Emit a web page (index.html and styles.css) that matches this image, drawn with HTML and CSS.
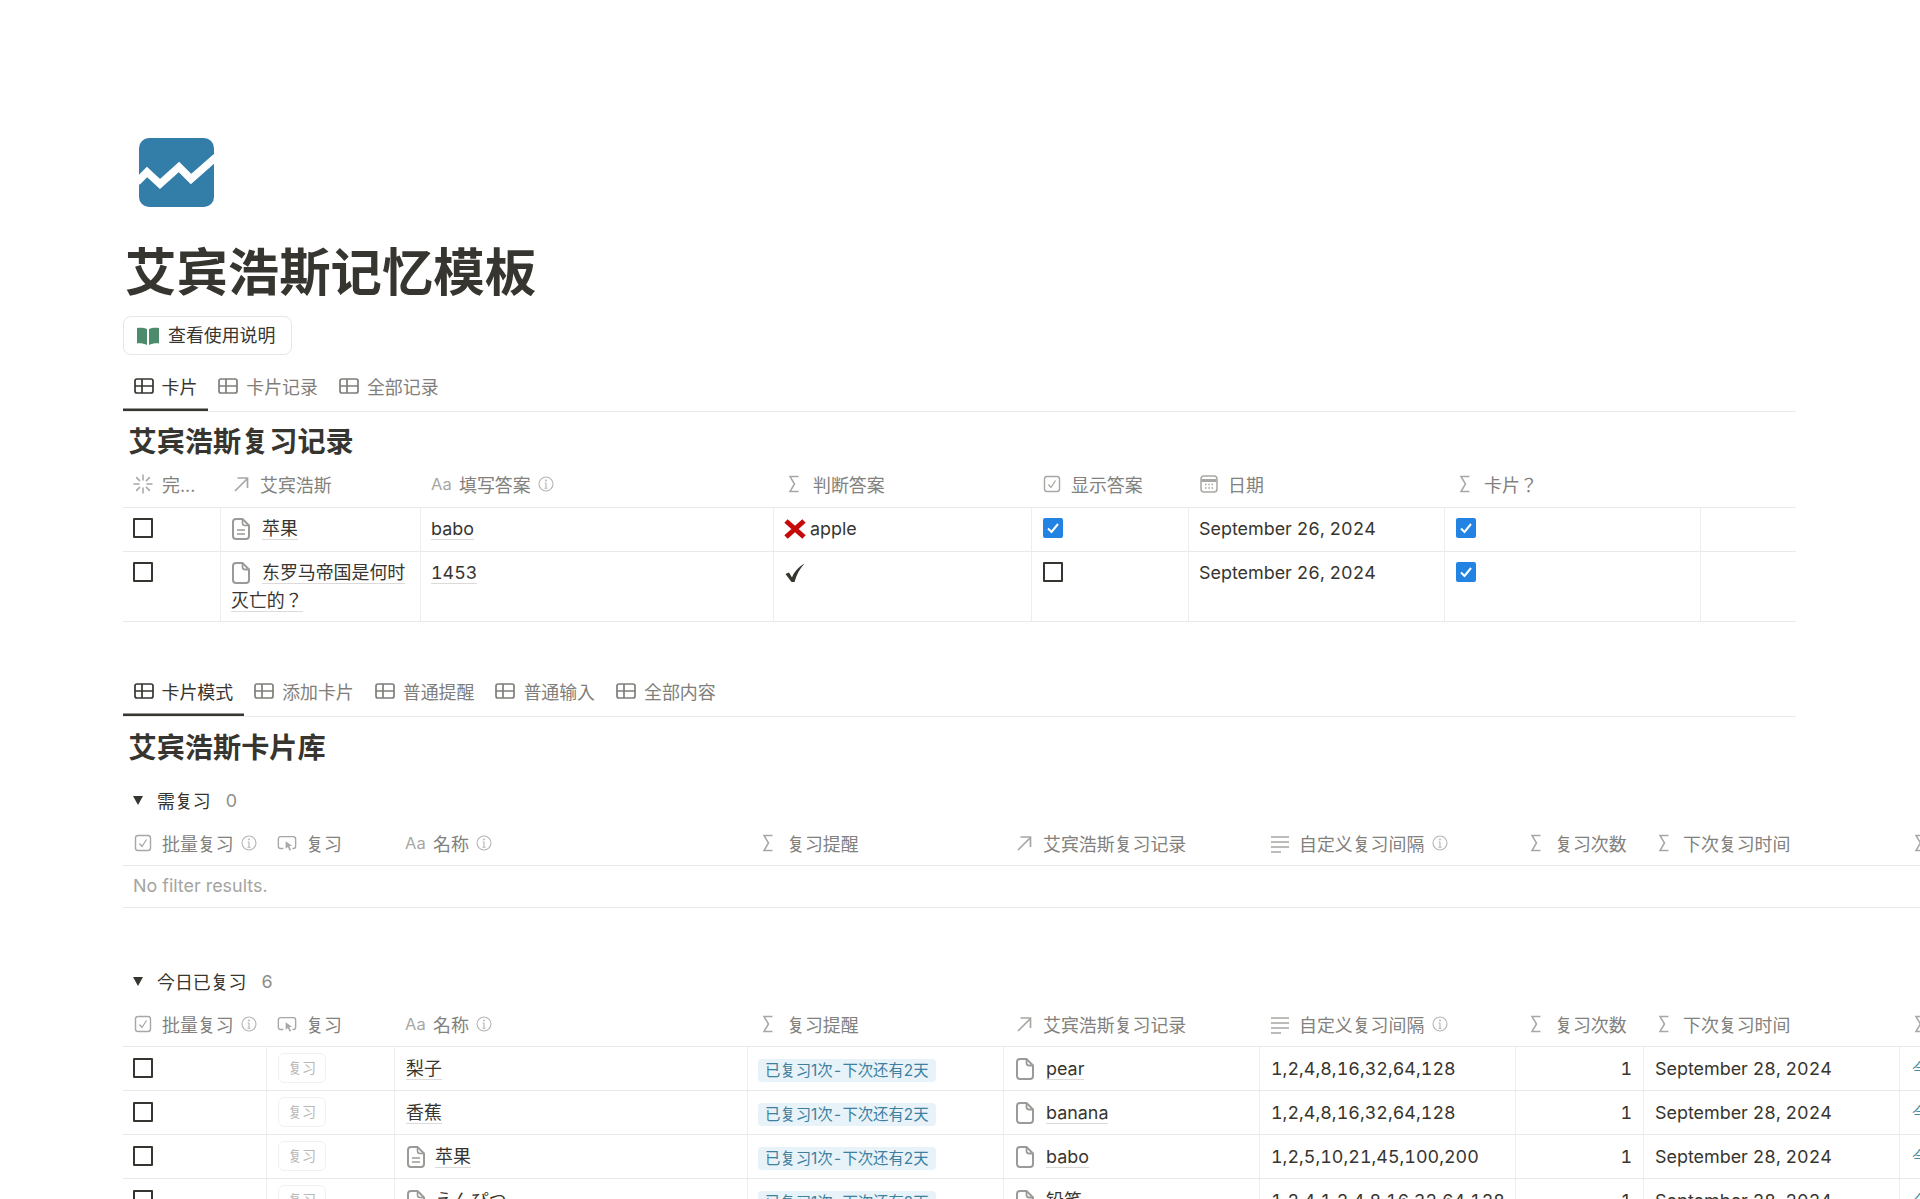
FILE: index.html
```html
<!DOCTYPE html>
<html lang="ja">
<head>
<meta charset="utf-8">
<title>艾宾浩斯记忆模板</title>
<link rel="stylesheet" href="styles.css">
</head>
<body>
<svg class="defs" aria-hidden="true">
  <defs>
    <symbol id="i-table" viewBox="0 0 20 16"><rect x="1" y="1" width="18" height="14" rx="2" fill="none" stroke="currentColor" stroke-width="1.7"/><path d="M1 8h18M8 1v14" fill="none" stroke="currentColor" stroke-width="1.7"/></symbol>
    <symbol id="i-file" viewBox="0 0 18 22"><path d="M4 1h6.5L17 7.5V18a3 3 0 0 1-3 3H4a3 3 0 0 1-3-3V4a3 3 0 0 1 3-3Z" fill="none" stroke="currentColor" stroke-width="2"/><path d="M10.500 1v4a2.500 2.500 0 0 0 2.500 2.500h4" fill="none" stroke="currentColor" stroke-width="1.800"/></symbol>
    <symbol id="i-filetext" viewBox="0 0 18 22"><path d="M4 1h6.5L17 7.5V18a3 3 0 0 1-3 3H4a3 3 0 0 1-3-3V4a3 3 0 0 1 3-3Z" fill="none" stroke="currentColor" stroke-width="2"/><path d="M10.500 1v4a2.500 2.500 0 0 0 2.500 2.500h4M5 12h8M5 16h8" fill="none" stroke="currentColor" stroke-width="1.600"/></symbol>
    <symbol id="i-spin" viewBox="0 0 20 20"><path d="M10 1v5M10 14v5M1 10h5M14 10h5M3.600 3.600l3 3M13.400 13.400l3 3M16.400 3.600l-3 3M6.600 13.400l-3 3" fill="none" stroke="currentColor" stroke-width="1.500" stroke-linecap="round"/></symbol>
    <symbol id="i-arrow" viewBox="0 0 20 20"><path d="M4 17 16 5M6.500 4H16.500V14" fill="none" stroke="currentColor" stroke-width="1.700"/></symbol>
    <symbol id="i-sigma" viewBox="0 0 20 20"><path d="M14.500 2.500H6L10.500 10 6 17.500h8.500" fill="none" stroke="currentColor" stroke-width="1.500"/></symbol>
    <symbol id="i-check" viewBox="0 0 20 20"><rect x="2.500" y="2.500" width="15" height="15" rx="2.500" fill="none" stroke="currentColor" stroke-width="1.400"/><path d="M6.500 10.500l2.500 3 4.500-7" fill="none" stroke="currentColor" stroke-width="1.300"/></symbol>
    <symbol id="i-cal" viewBox="0 0 20 20"><rect x="2" y="2" width="16" height="16" rx="3" fill="none" stroke="currentColor" stroke-width="1.500"/><path d="M2.500 6.500h15" stroke="currentColor" stroke-width="3"/><path d="M6 10.500h1.500M9.300 10.500h1.500M12.500 10.500h1.500M6 14h1.500M9.300 14h1.500M12.500 14h1.500" stroke="currentColor" stroke-width="1.400"/></symbol>
    <symbol id="i-lines" viewBox="0 0 20 20"><path d="M1 4h18M1 9h18M1 14h18M1 19h10" fill="none" stroke="currentColor" stroke-width="1.500"/></symbol>
    <symbol id="i-cursor" viewBox="0 0 22 20"><path d="M7 16H4a2.500 2.500 0 0 1-2.500-2.500v-8A2.500 2.500 0 0 1 4 3h14a2.500 2.500 0 0 1 2.500 2.500v8A2.500 2.500 0 0 1 18 16h-1" fill="none" stroke="currentColor" stroke-width="1.500"/><path d="M9.500 8l7 5-3 .6 2 4-1.600.8-2-4-2.400 2Z" fill="currentColor"/></symbol>
    <symbol id="i-info" viewBox="0 0 16 16"><circle cx="8" cy="8" r="7" fill="none" stroke="currentColor" stroke-width="1.100"/><path d="M8 7v5M6.500 12.200h3M6.800 7h1.200" fill="none" stroke="currentColor" stroke-width="1.100"/><circle cx="8" cy="4.500" r=".9" fill="currentColor"/></symbol>
  </defs>
</svg>

<main class="page">
  <svg class="logo" viewBox="0 0 75 69" role="img" aria-label="logo">
    <rect width="75" height="69" rx="10" fill="#337ea9"/>
    <path d="M-2 44 8 34l13 12 19-17 12 12 25-22" fill="none" stroke="#fff" stroke-width="7.500"/>
  </svg>
  <h1 class="title">艾宾浩斯记忆模板</h1>
  <button class="guide" type="button">
    <svg class="book" viewBox="0 0 22 18"><path d="M0 1C3 .5 7 .5 10 2v16C7 16.500 3 16 0 16.500ZM22 1C19 .5 15 .5 12 2v16c3-1.500 7-2 10-1.500Z" fill="#4e8b6c"/></svg>
    <span>查看使用说明</span>
  </button>

  <section class="db db-first">
    <nav class="tabs">
      <span class="tab on"><svg class="tab-ic"><use href="#i-table"/></svg>卡片</span>
      <span class="tab"><svg class="tab-ic"><use href="#i-table"/></svg>卡片记录</span>
      <span class="tab"><svg class="tab-ic"><use href="#i-table"/></svg>全部记录</span>
    </nav>
    <h2 class="db-title">艾宾浩斯复习记录</h2>
    <div class="grid grid-a">
      <div class="head">
        <span class="hc"><svg class="hi"><use href="#i-spin"/></svg>完...</span>
        <span class="hc"><svg class="hi"><use href="#i-arrow"/></svg>艾宾浩斯</span>
        <span class="hc"><span class="aa">Aa</span>填写答案<svg class="info"><use href="#i-info"/></svg></span>
        <span class="hc"><svg class="hi"><use href="#i-sigma"/></svg>判断答案</span>
        <span class="hc"><svg class="hi"><use href="#i-check"/></svg>显示答案</span>
        <span class="hc"><svg class="hi"><use href="#i-cal"/></svg>日期</span>
        <span class="hc"><svg class="hi"><use href="#i-sigma"/></svg>卡片？</span>
        <span class="hc"></span>
      </div>
      <div class="row">
        <div class="c"><span class="box"></span></div>
        <div class="c"><svg class="doc"><use href="#i-filetext"/></svg><span class="lk">苹果</span></div>
        <div class="c"><span class="lk">babo</span></div>
        <div class="c"><svg class="mark" viewBox="0 0 22 20"><path d="M2 2l18 16M20 2 2 18" stroke="#c60a0a" stroke-width="5" fill="none"/></svg>apple</div>
        <div class="c cb"><span class="box on"><svg viewBox="0 0 20 20"><path d="M5 10.500l3.500 3.500 6.500-8" fill="none" stroke="#fff" stroke-width="2"/></svg></span></div>
        <div class="c">September 26, 2024</div>
        <div class="c cb"><span class="box on"><svg viewBox="0 0 20 20"><path d="M5 10.500l3.500 3.500 6.500-8" fill="none" stroke="#fff" stroke-width="2"/></svg></span></div>
        <div class="c"></div>
      </div>
      <div class="row">
        <div class="c"><span class="box"></span></div>
        <div class="c"><svg class="doc"><use href="#i-file"/></svg><span class="lk">东罗马帝国是何时灭亡的？</span></div>
        <div class="c"><span class="lk">1453</span></div>
        <div class="c"><svg class="mark" viewBox="0 0 22 20"><path d="M1.500 11l3.500-1.500 3 5C10 9 14 4.500 20.500 .5c-4.500 5-8 11-10 18.500H7.500Z" fill="#37352f"/></svg></div>
        <div class="c cb"><span class="box"></span></div>
        <div class="c">September 26, 2024</div>
        <div class="c cb"><span class="box on"><svg viewBox="0 0 20 20"><path d="M5 10.500l3.500 3.500 6.500-8" fill="none" stroke="#fff" stroke-width="2"/></svg></span></div>
        <div class="c"></div>
      </div>
    </div>
  </section>

  <section class="db db-second">
    <nav class="tabs">
      <span class="tab on"><svg class="tab-ic"><use href="#i-table"/></svg>卡片模式</span>
      <span class="tab"><svg class="tab-ic"><use href="#i-table"/></svg>添加卡片</span>
      <span class="tab"><svg class="tab-ic"><use href="#i-table"/></svg>普通提醒</span>
      <span class="tab"><svg class="tab-ic"><use href="#i-table"/></svg>普通输入</span>
      <span class="tab"><svg class="tab-ic"><use href="#i-table"/></svg>全部内容</span>
    </nav>
    <h2 class="db-title db-title-b">艾宾浩斯卡片库</h2>

    <div class="group"><svg class="tri" viewBox="0 0 10 9"><path d="M0 0h10L5 9Z" fill="#37352f"/></svg><span>需复习</span><span class="count">0</span></div>
    <div class="grid grid-b">
      <div class="head head-b">
        <span class="hc"><svg class="hi"><use href="#i-check"/></svg>批量复习<svg class="info"><use href="#i-info"/></svg></span>
        <span class="hc"><svg class="hi"><use href="#i-cursor"/></svg>复习</span>
        <span class="hc"><span class="aa">Aa</span>名称<svg class="info"><use href="#i-info"/></svg></span>
        <span class="hc"><svg class="hi"><use href="#i-sigma"/></svg>复习提醒</span>
        <span class="hc"><svg class="hi"><use href="#i-arrow"/></svg>艾宾浩斯复习记录</span>
        <span class="hc"><svg class="hi"><use href="#i-lines"/></svg>自定义复习间隔<svg class="info"><use href="#i-info"/></svg></span>
        <span class="hc"><svg class="hi"><use href="#i-sigma"/></svg>复习次数</span>
        <span class="hc"><svg class="hi"><use href="#i-sigma"/></svg>下次复习时间</span>
        <span class="hc"><svg class="hi"><use href="#i-sigma"/></svg>状态</span>
      </div>
      <div class="empty">No filter results.</div>
    </div>

    <div class="group group-b"><svg class="tri" viewBox="0 0 10 9"><path d="M0 0h10L5 9Z" fill="#37352f"/></svg><span>今日已复习</span><span class="count">6</span></div>
    <div class="grid grid-b">
      <div class="head head-b">
        <span class="hc"><svg class="hi"><use href="#i-check"/></svg>批量复习<svg class="info"><use href="#i-info"/></svg></span>
        <span class="hc"><svg class="hi"><use href="#i-cursor"/></svg>复习</span>
        <span class="hc"><span class="aa">Aa</span>名称<svg class="info"><use href="#i-info"/></svg></span>
        <span class="hc"><svg class="hi"><use href="#i-sigma"/></svg>复习提醒</span>
        <span class="hc"><svg class="hi"><use href="#i-arrow"/></svg>艾宾浩斯复习记录</span>
        <span class="hc"><svg class="hi"><use href="#i-lines"/></svg>自定义复习间隔<svg class="info"><use href="#i-info"/></svg></span>
        <span class="hc"><svg class="hi"><use href="#i-sigma"/></svg>复习次数</span>
        <span class="hc"><svg class="hi"><use href="#i-sigma"/></svg>下次复习时间</span>
        <span class="hc"><svg class="hi"><use href="#i-sigma"/></svg>状态</span>
      </div>
      <div class="row row-b">
        <div class="c"><span class="box"></span></div>
        <div class="c"><span class="rv">复习</span></div>
        <div class="c"><span class="lk">梨子</span></div>
        <div class="c"><span class="pill">已复习1次 - 下次还有2天</span></div>
        <div class="c"><svg class="doc"><use href="#i-file"/></svg><span class="lk">pear</span></div>
        <div class="c">1,2,4,8,16,32,64,128</div>
        <div class="c num">1</div>
        <div class="c">September 28, 2024</div>
        <div class="c"><span class="today">今日已复习</span></div>
      </div>
      <div class="row row-b">
        <div class="c"><span class="box"></span></div>
        <div class="c"><span class="rv">复习</span></div>
        <div class="c"><span class="lk">香蕉</span></div>
        <div class="c"><span class="pill">已复习1次 - 下次还有2天</span></div>
        <div class="c"><svg class="doc"><use href="#i-file"/></svg><span class="lk">banana</span></div>
        <div class="c">1,2,4,8,16,32,64,128</div>
        <div class="c num">1</div>
        <div class="c">September 28, 2024</div>
        <div class="c"><span class="today">今日已复习</span></div>
      </div>
      <div class="row row-b">
        <div class="c"><span class="box"></span></div>
        <div class="c"><span class="rv">复习</span></div>
        <div class="c"><svg class="doc doc-tight"><use href="#i-filetext"/></svg><span class="lk">苹果</span></div>
        <div class="c"><span class="pill">已复习1次 - 下次还有2天</span></div>
        <div class="c"><svg class="doc"><use href="#i-file"/></svg><span class="lk">babo</span></div>
        <div class="c">1,2,5,10,21,45,100,200</div>
        <div class="c num">1</div>
        <div class="c">September 28, 2024</div>
        <div class="c"><span class="today">今日已复习</span></div>
      </div>
      <div class="row row-b">
        <div class="c"><span class="box"></span></div>
        <div class="c"><span class="rv">复习</span></div>
        <div class="c"><svg class="doc doc-tight"><use href="#i-filetext"/></svg><span class="lk">えんぴつ</span></div>
        <div class="c"><span class="pill">已复习1次 - 下次还有2天</span></div>
        <div class="c"><svg class="doc"><use href="#i-file"/></svg><span class="lk">铅笔</span></div>
        <div class="c">1,2,4,1,2,4,8,16,32,64,128</div>
        <div class="c num">1</div>
        <div class="c">September 28, 2024</div>
        <div class="c"><span class="today">今日已复习</span></div>
      </div>
    </div>
  </section>
</main>
</body>
</html>
```
FILE: styles.css
```css
* { box-sizing: border-box; }
html, body { margin: 0; height: 100%; overflow: hidden; background: #fff; }
body {
  color: #37352f;
  font-family: Inter, "Noto Sans CJK JP", "Noto Sans", sans-serif;
  font-size: 17.92px;
}
.defs { position: absolute; width: 0; height: 0; }
.page { width: 1673px; margin-left: 123px; padding-top: 138px; }
.logo { display: block; width: 75px; height: 69px; margin-left: 16px; }
.title { margin: 34px 0 -2px 2px; font-size: 51.4px; line-height: 62px; font-weight: 700; }
.guide {
  display: flex; align-items: center; gap: 9px;
  width: 169px; height: 39px; margin-top: 15px; padding: 0 0 3px 13px;
  border: 1px solid #e6e6e4; border-radius: 8px; background: #fff;
  color: inherit; font: inherit; white-space: nowrap;
}
.book { width: 22px; height: 18px; flex: none; margin-top: 3px; }

.db-first { margin-top: 12px; }
.db-second { margin-top: 50px; }
.tabs { display: flex; height: 45px; border-bottom: 1px solid #e9e9e7; color: #7f7e7a; }
.tab { display: flex; align-items: center; gap: 8px; height: 44px; padding: 0 10.5px 7px; white-space: nowrap; }
.tab.on { color: #37352f; box-shadow: inset 0 -2.5px 0 #37352f; }
.tab-ic { width: 20px; height: 16px; flex: none; }
.db-title { margin: 12px 0 0 5.5px; font-size: 28.16px; line-height: 36px; font-weight: 700; }
.db-title-b { margin-top: 13px; }

.group { display: flex; align-items: center; height: 36px; margin-top: 16px; padding-left: 10px; }
.group-b { margin-top: 55px; }
.tri { width: 10px; height: 9px; margin-right: 14px; flex: none; }
.count { margin-left: 15px; color: #8f8e8a; }

.grid { width: max-content; }
.head, .row { display: grid; }
.grid-a { width: 100%; }
.grid-a .head, .grid-a .row { grid-template-columns: 98px 200px 353px 258px 157px 256px 256px 95px; }
.grid-b .head, .grid-b .row { grid-template-columns: 144px 128px 353px 256px 256px 256px 128px 256px 256px; }
.head { height: 48px; border-bottom: 1px solid #e9e9e7; }
.head-b { height: 46px; margin-top: 2px; }
.hc {
  display: flex; align-items: center; gap: 9px; padding-left: 10px;
  color: #82817d; white-space: nowrap; overflow: hidden;
}
.hi { width: 20px; height: 20px; flex: none; color: #a8a7a3; }
.aa { width: 20px; margin-right: -1px; flex: none; color: #a8a7a3; font-size: 16.5px; white-space: nowrap; }
.info { width: 16px; height: 16px; margin-left: -1.5px; flex: none; color: #b5b4b1; }

.row { min-height: 44px; border-bottom: 1px solid #e9e9e7; }
.row-b { min-height: 43.4px; }
.c {
  padding: 7px 10px 6px; line-height: 28px; border-right: 1px solid #eeeeec;
  font-variant-numeric: tabular-nums;
}
.grid-b .c { padding: 8px 11px 6px; }
.c:last-child { border-right: 0; }
.cb { padding-left: 11px; }
.num { text-align: right; }
.box {
  display: block; width: 20px; height: 20px; margin-top: 3px;
  border: 2px solid #37352f; border-radius: 1px;
}
.grid-b .box { margin-left: -1px; }
.box.on { border: 0; background: #2383e2; border-radius: 2px; }
.box svg { display: block; width: 20px; height: 20px; }
.lk { border-bottom: 1px solid #dcdbd9; }
.doc { width: 18px; height: 22px; margin: 0 12px 0 1px; vertical-align: -5px; color: #9b9a97; }
.doc-tight { margin-right: 10px; }
.mark { width: 22px; height: 20px; margin-right: 4px; vertical-align: -4px; }
.rv {
  display: block; width: 48px; height: 30px; margin: -2px 0 0;
  border: 1px solid #f0f0ee; border-radius: 6px;
  color: #b9b8b5; font-size: 14.08px; line-height: 28px; text-align: center;
}
.pill {
  display: inline-block; padding: 0 7px; height: 23px; line-height: 23px; margin-left: -1px;
  background: #e7f3f8; color: #3f7f9f; border-radius: 4px; font-size: 15.36px;
  font-variant-numeric: normal; word-spacing: -3px; white-space: nowrap; vertical-align: -1px;
}
.today { display: inline-block; margin-left: 1px; color: #3f8fa8; font-size: 15.36px; white-space: nowrap; }
.empty { height: 42px; padding-left: 10px; line-height: 40px; color: #a5a4a0; border-bottom: 1px solid #e9e9e7; }
```
